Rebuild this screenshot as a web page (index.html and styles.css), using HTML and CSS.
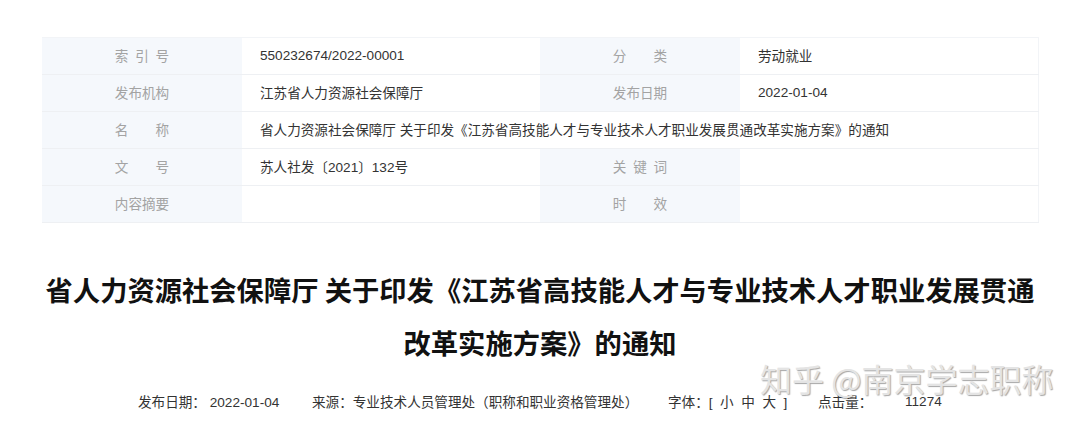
FILE: index.html
```html
<!DOCTYPE html>
<html lang="zh-CN">
<head>
    <meta charset="UTF-8">
    <title>省人力资源社会保障厅 关于印发《江苏省高技能人才与专业技术人才职业发展贯通改革实施方案》的通知</title>
    <link rel="stylesheet" href="styles.css">
</head>
<body>
    <!-- 信息公开属性表 -->
    <table class="infoTable">
        <tr>
            <td class="label">索&ensp;引&ensp;号</td>
            <td class="value">550232674/2022-00001</td>
            <td class="label">分&emsp;&emsp;类</td>
            <td class="value">劳动就业</td>
        </tr>
        <tr>
            <td class="label">发布机构</td>
            <td class="value">江苏省人力资源社会保障厅</td>
            <td class="label">发布日期</td>
            <td class="value">2022-01-04</td>
        </tr>
        <tr>
            <td class="label">名&emsp;&emsp;称</td>
            <td class="value" colspan="3">省人力资源社会保障厅 关于印发《江苏省高技能人才与专业技术人才职业发展贯通改革实施方案》的通知</td>
        </tr>
        <tr>
            <td class="label">文&emsp;&emsp;号</td>
            <td class="value">苏人社发〔2021〕132号</td>
            <td class="label">关&ensp;键&ensp;词</td>
            <td class="value"></td>
        </tr>
        <tr>
            <td class="label">内容摘要</td>
            <td class="value"></td>
            <td class="label">时&emsp;&emsp;效</td>
            <td class="value"></td>
        </tr>
    </table>

    <!-- 文章标题 -->
    <h1 class="articleTitle">省人力资源社会保障厅 关于印发《江苏省高技能人才与专业技术人才职业发展贯通<br>改革实施方案》的通知</h1>

    <!-- 文章信息栏 -->
    <div class="articleMeta">
        <span class="metaDate">发布日期：&nbsp;2022-01-04</span>
        <span class="metaSource">来源：专业技术人员管理处（职称和职业资格管理处）</span>
        <span class="metaFont">字体：[&nbsp;&nbsp;小&nbsp;&nbsp;中&nbsp;&nbsp;大&nbsp;&nbsp;]</span>
        <span class="metaHits">点击量：</span>
        <span class="metaCount">11274</span>
        <div class="watermark">知乎 @南京学志职称</div>
    </div>
</body>
</html>
```

FILE: styles.css
```css
/* 页面基础样式 */
body {
    margin: 0;
    padding: 0;
    background: #fff;
    font-family: "Liberation Sans", "Noto Sans CJK SC", sans-serif;
    color: #333;
}

/* 属性表 */
.infoTable {
    width: 996px;
    margin: 37px 0 0 42px;
    border-collapse: collapse;
    table-layout: fixed;
    font-size: 13.6px;
    border-top: 1px solid #f2f4f7;
    border-right: 1px solid #f2f4f7;
}

.infoTable td {
    height: 34px;
    padding: 0 0 2px;
    border-bottom: 1px solid #eef0f3;
}

.infoTable td.label {
    width: 200px;
    background: #f5f8fc;
    color: #a3a3a3;
    text-align: center;
}

.infoTable td.value {
    width: 280px;
    padding-left: 18px;
    color: #333;
}

/* 标题 */
.articleTitle {
    margin: 40px 0 0;
    font-size: 27.3px;
    line-height: 53px;
    font-weight: bold;
    text-align: center;
    color: #111;
    font-family: "Noto Sans CJK SC", sans-serif;
}

/* 信息栏 */
.articleMeta {
    position: relative;
    display: flex;
    align-items: center;
    height: 20px;
    margin-top: 22px;
    padding-left: 138px;
    font-size: 13.6px;
    color: #333;
}

.metaDate {
    width: 174px;
}

.metaSource {
    width: 356px;
}

.metaFont {
    width: 150px;
}

.metaHits {
    width: 87px;
}

/* 水印 */
.watermark {
    position: absolute;
    left: 760px;
    top: -31px;
    font-size: 32px;
    line-height: 36px;
    color: #e4e4e4;
    text-shadow: 1px 1px 1px rgba(0, 0, 0, 0.35);
    font-family: "Noto Sans CJK SC", sans-serif;
    white-space: nowrap;
}
```
